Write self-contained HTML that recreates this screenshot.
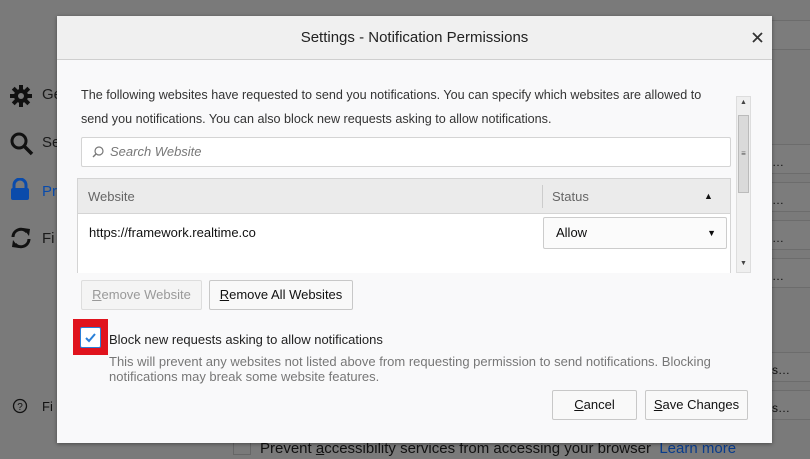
<!DOCTYPE html>
<html><head><meta charset="utf-8"><style>
*{box-sizing:border-box;margin:0;padding:0}
body{width:810px;height:459px;overflow:hidden;background:#7a7a7a;font-family:"Liberation Sans",sans-serif;position:relative;color:#0c0c0d}
.a{position:absolute}
.side{color:#1a1a1a;font-size:15px}
.rbox{position:absolute;left:772px;width:40px;height:30px;border-top:1px solid #6c6c6c;border-bottom:1px solid #6c6c6c;background:#7c7c7c;color:#111;font-size:12px;padding:10px 0 0 0}
.dlg{position:absolute;left:57px;top:16px;width:715px;height:427px;background:#f9f9fa;box-shadow:0 1px 4px rgba(0,0,0,.4)}
.hdr{height:44px;background:#f0f0f0;border-bottom:1px solid #cfcfcf;text-align:center;font-size:15px;line-height:44px;color:#222}
.btn{position:absolute;height:30px;border:1px solid #c8c8c8;background:#f9f9f9;font-size:13px;text-align:center;line-height:28px;border-radius:2px}
</style></head><body>
<svg class="a" style="left:9px;top:84px" width="24" height="24" viewBox="0 0 24 24"><g fill="#111"><circle cx="12" cy="12" r="7"/><rect x="10" y="1" width="4" height="22"/><rect x="1" y="10" width="22" height="4"/><rect x="10" y="1" width="4" height="22" transform="rotate(45 12 12)"/><rect x="10" y="1" width="4" height="22" transform="rotate(-45 12 12)"/></g><circle cx="12" cy="12" r="3" fill="#7a7a7a"/></svg>
<div class="a side" style="left:42px;top:86px">Ge</div>
<svg class="a" style="left:10px;top:132px" width="24" height="24"><circle cx="9" cy="9" r="7" fill="none" stroke="#111" stroke-width="3"/><line x1="14" y1="14" x2="22" y2="22" stroke="#111" stroke-width="3.5"/></svg>
<div class="a side" style="left:42px;top:134px">Se</div>
<svg class="a" style="left:10px;top:178px" width="20" height="24"><path d="M4 11V7a6 6 0 0 1 12 0v4" fill="none" stroke="#0a4bab" stroke-width="3"/><rect x="1" y="10" width="18" height="12" rx="2" fill="#0a4bab"/></svg>
<div class="a side" style="left:42px;top:183px;color:#0a4bab">Pr</div>
<svg class="a" style="left:9px;top:226px" width="24" height="24"><path d="M4 11a8 8 0 0 1 14-5M20 13a8 8 0 0 1-14 5" fill="none" stroke="#111" stroke-width="3"/><path d="M14 2l7 1-1 7z M10 22l-7-1 1-7z" fill="#111"/></svg>
<div class="a side" style="left:42px;top:230px">Fi</div>
<svg class="a" style="left:12px;top:398px" width="16" height="16"><circle cx="8" cy="8" r="6.5" fill="none" stroke="#111" stroke-width="1.3"/><text x="8" y="12" font-size="10" text-anchor="middle" font-family="Liberation Sans" fill="#111">?</text></svg>
<div class="a" style="left:42px;top:399px;font-size:13px;color:#111">Fi</div>
<div class="rbox" style="top:20px"></div>
<div class="rbox" style="top:144px">…</div>
<div class="rbox" style="top:182px">…</div>
<div class="rbox" style="top:220px">…</div>
<div class="rbox" style="top:258px">…</div>
<div class="rbox" style="top:352px">s…</div>
<div class="rbox" style="top:390px">s…</div>
<div class="a" style="left:233px;top:437px;width:18px;height:18px;border:1px solid #666"></div>
<div class="a" style="left:260px;top:440px;font-size:15px;color:#111;white-space:nowrap">Prevent <u>a</u>ccessibility services from accessing your browser &nbsp;<span style="color:#0a3c8c">Learn more</span></div>

<div class="dlg">
 <div class="hdr">Settings - Notification Permissions</div>
 <svg class="a" style="right:9px;top:16px" width="11" height="11"><path d="M1 1L10 10M10 1L1 10" stroke="#333" stroke-width="1.8"/></svg>
 <div class="a" style="left:24px;top:67px;width:648px;font-size:12.6px;line-height:24px;color:#333">The following websites have requested to send you notifications. You can specify which websites are allowed to send you notifications. You can also block new requests asking to allow notifications.</div>
 <div class="a" style="left:24px;top:121px;width:650px;height:30px;background:#fff;border:1px solid #d4d4d4;border-radius:2px;font-size:13px;font-style:italic;color:#777;line-height:28px;padding-left:28px">Search Website
  <svg class="a" style="left:10px;top:8px" width="12" height="12"><circle cx="7" cy="5" r="4" fill="none" stroke="#777" stroke-width="1.2"/><line x1="4" y1="8" x2="1" y2="11" stroke="#777" stroke-width="1.4"/></svg></div>
 <div class="a" style="left:20px;top:162px;width:654px;height:95px;background:#fff;border:1px solid #d4d4d4;border-bottom:none;overflow:hidden">
  <div style="height:35px;background:#ebebeb;border-bottom:1px solid #d4d4d4;font-size:13px;color:#666;line-height:35px;padding-left:10px;position:relative">Website
   <div class="a" style="left:464px;top:6px;height:23px;border-left:1px solid #ccc"></div>
   <div class="a" style="left:474px;top:0">Status</div>
   <div class="a" style="left:626px;top:0;font-size:9px;color:#111">▲</div>
  </div>
  <div class="a" style="left:11px;top:46px;font-size:13px;color:#111">https://framework.realtime.co</div>
  <div class="a" style="left:465px;top:38px;width:184px;height:32px;border:1px solid #ccc;border-radius:2px;background:#fbfbfb;font-size:13px;line-height:30px;padding-left:12px">Allow<span style="position:absolute;right:10px;font-size:9px">▼</span></div>
 </div>
 <div class="a" style="left:679px;top:80px;width:15px;height:177px;background:#efefef;border:1px solid #ddd">
  <div class="a" style="left:3px;top:2px;font-size:7px;color:#444">▲</div>
  <div class="a" style="left:1px;top:18px;width:11px;height:78px;background:#dadada;border:1px solid #bbb;font-size:8px;text-align:center;line-height:76px;color:#555">≡</div>
  <div class="a" style="left:3px;top:163px;font-size:7px;color:#444">▼</div>
 </div>
 <div class="btn" style="left:24px;top:264px;width:121px;color:#999;background:#f4f4f4;border-color:#ddd"><u>R</u>emove Website</div>
 <div class="btn" style="left:152px;top:264px;width:144px;color:#111"><u>R</u>emove All Websites</div>
 <div class="a" style="left:16px;top:303px;width:35px;height:36px;background:#e0131d"></div>
 <div class="a" style="left:23px;top:311px;width:21px;height:21px;background:#fff;border:1px solid #2a80d8;border-radius:2px"><svg width="19" height="19"><path d="M5 10l3 3 6-7" fill="none" stroke="#2a80d8" stroke-width="2"/></svg></div>
 <div class="a" style="left:52px;top:316px;font-size:13px;color:#222">Block new requests asking to allow notifications</div>
 <div class="a" style="left:52px;top:338px;width:640px;font-size:13px;line-height:15px;color:#777">This will prevent any websites not listed above from requesting permission to send notifications. Blocking notifications may break some website features.</div>
 <div class="btn" style="left:495px;top:374px;width:85px;color:#111"><u>C</u>ancel</div>
 <div class="btn" style="left:588px;top:374px;width:103px;color:#111"><u>S</u>ave Changes</div>
</div>
</body></html>
